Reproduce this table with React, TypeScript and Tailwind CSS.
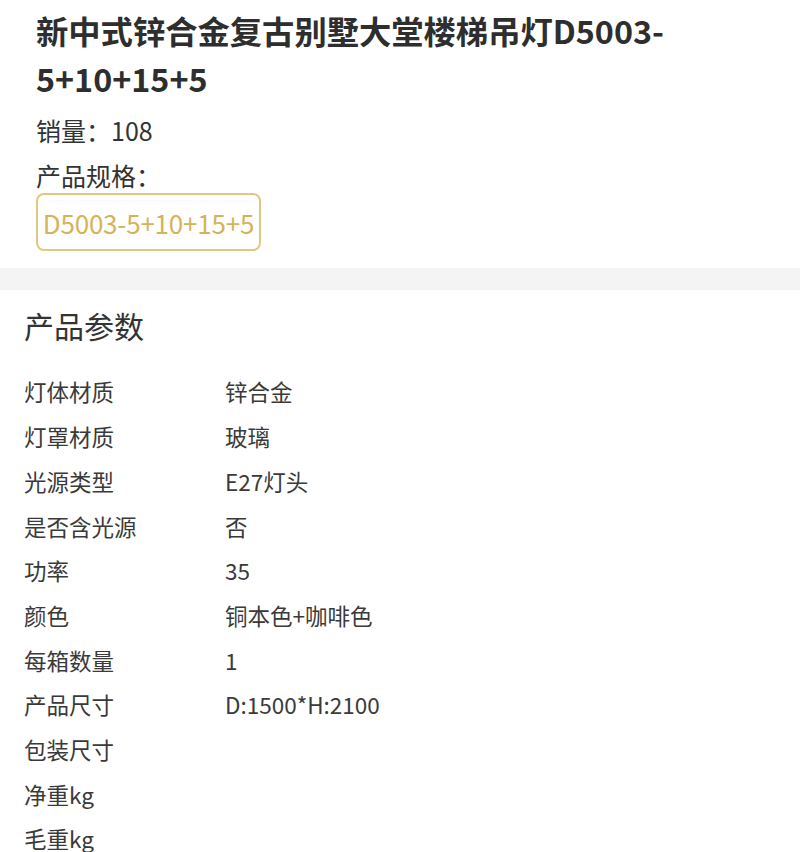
import React from 'react';

const params: [string, string][] = [
  ['灯体材质', '锌合金'],
  ['灯罩材质', '玻璃'],
  ['光源类型', 'E27灯头'],
  ['是否含光源', '否'],
  ['功率', '35'],
  ['颜色', '铜本色+咖啡色'],
  ['每箱数量', '1'],
  ['产品尺寸', 'D:1500*H:2100'],
  ['包装尺寸', ''],
  ['净重kg', ''],
  ['毛重kg', ''],
];

export default function App() {
  return (
    <div
      className="w-[800px] h-[852px] overflow-hidden bg-white text-[#333]"
      style={{ fontFamily: '"Noto Sans CJK SC", "Noto Sans", sans-serif' }}
    >
      <section className="pl-[36px] pr-[30px] pt-[6px] pb-[17px]">
        <h1 className="text-[32.3px] leading-[48px] font-bold text-[#2e2e2e]">
          新中式锌合金复古别墅大堂楼梯吊灯D5003-5+10+15+5
        </h1>
        <div className="mt-[10px] text-[25px] leading-[36px]">销量：108</div>
        <div className="mt-[9px] text-[25px] leading-[36px]">产品规格：</div>
        <div className="flex">
          <span className="h-[58px] w-[225px] flex items-center justify-center border-2 border-[#e3c77e] rounded-[8px] text-[26px] tracking-[-0.2px] text-[#d6b25a]">
            D5003-5+10+15+5
          </span>
        </div>
      </section>

      <div className="h-[22px] bg-[#f4f4f4]" />

      <section className="px-[24px] pt-[15px]">
        <h2 className="text-[30px] leading-[40px] text-[#333]">产品参数</h2>
        <div className="mt-[25px]">
          {params.map(([label, value]) => (
            <div key={label} className="flex h-[44.7px] items-center text-[22.5px] text-[#3a3a3a]">
              <span className="w-[201px]">{label}</span>
              <span>{value}</span>
            </div>
          ))}
        </div>
      </section>
    </div>
  );
}
